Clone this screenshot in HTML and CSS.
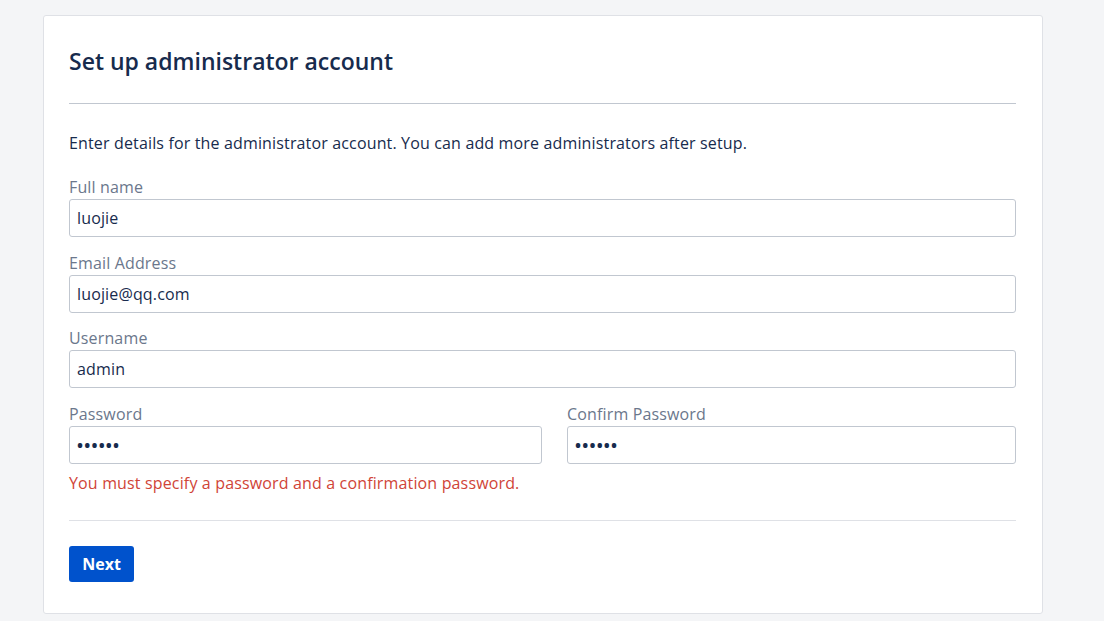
FILE: index.html
```html
<!DOCTYPE html>
<html lang="en">
<head>
<meta charset="utf-8">
<title>Set up administrator account</title>
<link rel="stylesheet" href="styles.css">
</head>
<body>
<div class="card">
  <div class="card-header">
    <h1 class="title">Set up administrator account</h1>
  </div>
  <p class="intro">Enter details for the administrator account. You can add more administrators after setup.</p>
  <form class="form">
    <div class="field">
      <label class="label">Full name</label>
      <input class="input" type="text" value="luojie">
    </div>
    <div class="field">
      <label class="label">Email Address</label>
      <input class="input" type="text" value="luojie@qq.com">
    </div>
    <div class="field">
      <label class="label">Username</label>
      <input class="input" type="text" value="admin">
    </div>
    <div class="row">
      <div class="col">
        <label class="label">Password</label>
        <input class="input pw" type="password" value="123456">
      </div>
      <div class="col">
        <label class="label">Confirm Password</label>
        <input class="input pw" type="password" value="123456">
      </div>
    </div>
    <div class="error">You must specify a password and a confirmation password.</div>
    <div class="footer">
      <button class="btn" type="button">Next</button>
    </div>
  </form>
</div>
</body>
</html>
```
FILE: styles.css
```css
html, body {
  margin: 0;
  padding: 0;
}
body {
  background: #f4f5f7;
  font-family: "Open Sans", "Noto Sans", sans-serif;
  color: #172b4d;
  font-size: 16px;
  letter-spacing: 0.15px;
}
.card {
  box-sizing: border-box;
  width: 1000px;
  margin: 15px 0 0 43px;
  background: #fff;
  border: 1px solid #dfe1e6;
  border-radius: 3px;
  padding: 29px 26px 31px 25px;
}
.card-header {
  padding-bottom: 26px;
  border-bottom: 1px solid #c1c7d0;
}
.title {
  margin: 0;
  font-size: 23px;
  line-height: 32px;
  font-weight: 600;
  letter-spacing: 0;
  color: #172b4d;
}
.intro {
  margin: 27px 0 20px;
  line-height: 24px;
}
.form {
  margin: 0;
}
.field {
  display: flex;
  flex-direction: column;
  margin-bottom: 13.5px;
}
.label {
  display: block;
  line-height: 24px;
  color: #6b778c;
}
.input {
  box-sizing: border-box;
  width: 100%;
  height: 38px;
  border: 1px solid #c1c7d0;
  border-radius: 3px;
  padding: 0 7px;
  font-family: inherit;
  font-size: 16px;
  letter-spacing: 0.15px;
  color: #172b4d;
  background: #fff;
  outline: none;
}
.pw {
  font-size: 16px;
  letter-spacing: 1.2px;
  font-weight: 700;
}
.row {
  display: grid;
  grid-template-columns: 473px 1fr;
  column-gap: 25px;
}
.col {
  display: flex;
  flex-direction: column;
}
.error {
  margin-top: 7.5px;
  line-height: 24px;
  color: #d04437;
}
.footer {
  margin-top: 25px;
  padding-top: 25px;
  border-top: 1px solid #dfe1e6;
}
.btn {
  display: block;
  height: 36px;
  width: 65px;
  border: none;
  border-radius: 3px;
  background: #0052cc;
  color: #fff;
  font-family: inherit;
  font-size: 16px;
  font-weight: 700;
  letter-spacing: 0;
  padding: 0;
  cursor: pointer;
}
```
